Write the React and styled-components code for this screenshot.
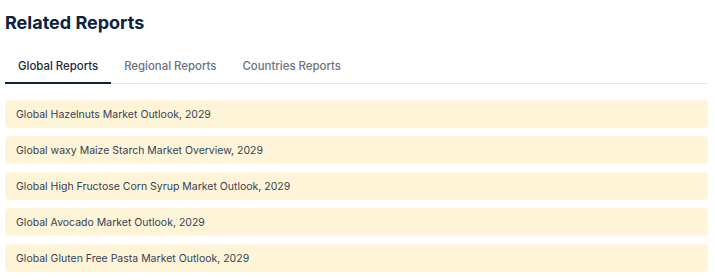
import React from 'react';
import styled, { createGlobalStyle } from 'styled-components';

const GlobalStyle = createGlobalStyle`
  body {
    margin: 0;
    background: #ffffff;
    font-family: Inter, "Noto Sans", sans-serif;
  }
`;

const Wrapper = styled.section`
  padding: 11px 7px 0 5px;
`;

const Title = styled.h2`
  margin: 0;
  font-size: 18px;
  line-height: 24px;
  font-weight: 700;
  color: #0b2340;
`;

const TabList = styled.div`
  display: flex;
  margin-top: 18px;
  border-bottom: 1px solid #e5e7eb;
`;

const Tab = styled.button`
  border: 0;
  background: none;
  font-family: inherit;
  font-size: 11.4px;
  font-weight: 500;
  line-height: 16px;
  padding: 5px 13px 8px;
  margin-bottom: -1px;
  cursor: pointer;
  color: ${(p) => (p.$active ? '#1f2937' : '#6b7280')};
  border-bottom: 2px solid ${(p) => (p.$active ? '#0b2340' : 'transparent')};
`;

const List = styled.ul`
  list-style: none;
  margin: 16px 0 0;
  padding: 0;
  display: flex;
  flex-direction: column;
  gap: 8px;
`;

const Item = styled.li`
  height: 28px;
  display: flex;
  align-items: center;
  padding: 0 11px;
  border-radius: 4px;
  background: #fef5d9;
  font-size: 10.5px;
  color: #374151;
`;

const tabs = ['Global Reports', 'Regional Reports', 'Countries Reports'];

const reports = [
  'Global Hazelnuts Market Outlook, 2029',
  'Global waxy Maize Starch Market Overview, 2029',
  'Global High Fructose Corn Syrup Market Outlook, 2029',
  'Global Avocado Market Outlook, 2029',
  'Global Gluten Free Pasta Market Outlook, 2029',
];

export default function App() {
  const [active, setActive] = React.useState(0);
  return (
    <Wrapper>
      <GlobalStyle />
      <Title>Related Reports</Title>
      <TabList>
        {tabs.map((t, i) => (
          <Tab key={t} $active={i === active} onClick={() => setActive(i)}>
            {t}
          </Tab>
        ))}
      </TabList>
      <List>
        {reports.map((r) => (
          <Item key={r}>{r}</Item>
        ))}
      </List>
    </Wrapper>
  );
}
